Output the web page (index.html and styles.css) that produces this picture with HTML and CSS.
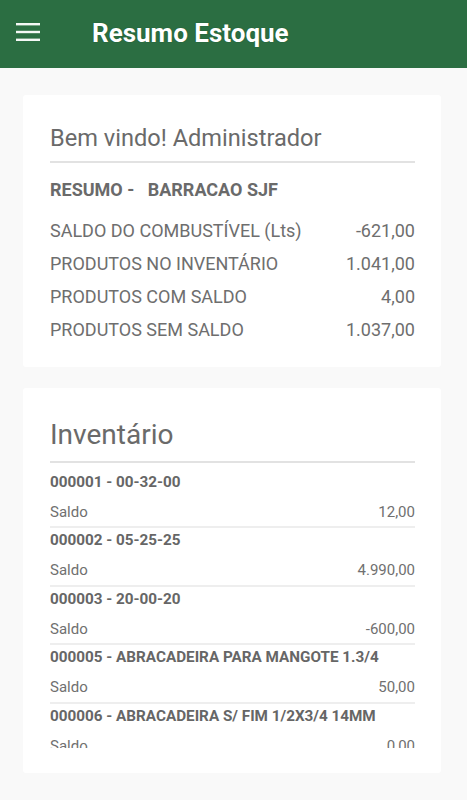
FILE: index.html
```html
<!DOCTYPE html>
<html lang="pt-BR">
  <head>
    <meta charset="UTF-8" />
    <meta name="viewport" content="width=device-width, initial-scale=1.0" />
    <title>Resumo Estoque</title>
    <link rel="stylesheet" href="styles.css">
  </head>
  <body>
    <!-- Toolbar -->
    <header class="toolbar">
      <svg class="menu-icon" width="24" height="18" viewBox="0 0 24 18">
        <rect x="0" y="0" width="24" height="2.4" fill="#f4f8f5" />
        <rect x="0" y="7.8" width="24" height="2.4" fill="#f4f8f5" />
        <rect x="0" y="15.6" width="24" height="2.4" fill="#f4f8f5" />
      </svg>
      <h1 class="toolbar-title">Resumo Estoque</h1>
    </header>

    <main class="content">
      <!-- Resumo -->
      <section class="card card-resumo">
        <h2 class="card-title">Bem vindo! Administrador</h2>
        <div class="resumo-local">RESUMO -   BARRACAO SJF</div>
        <div class="resumo-rows">
          <div class="resumo-row"><span>SALDO DO COMBUSTÍVEL (Lts)</span><span>-621,00</span></div>
          <div class="resumo-row"><span>PRODUTOS NO INVENTÁRIO</span><span>1.041,00</span></div>
          <div class="resumo-row"><span>PRODUTOS COM SALDO</span><span>4,00</span></div>
          <div class="resumo-row"><span>PRODUTOS SEM SALDO</span><span>1.037,00</span></div>
        </div>
      </section>

      <!-- Inventario -->
      <section class="card card-inventario">
        <h2 class="inv-title">Inventário</h2>
        <div class="inv-list">
          <div class="inv-item">
            <div class="inv-name">000001 - 00-32-00</div>
            <div class="inv-saldo"><span>Saldo</span><span>12,00</span></div>
          </div>
          <div class="inv-item">
            <div class="inv-name">000002 - 05-25-25</div>
            <div class="inv-saldo"><span>Saldo</span><span>4.990,00</span></div>
          </div>
          <div class="inv-item">
            <div class="inv-name">000003 - 20-00-20</div>
            <div class="inv-saldo"><span>Saldo</span><span>-600,00</span></div>
          </div>
          <div class="inv-item">
            <div class="inv-name">000005 - ABRACADEIRA PARA MANGOTE 1.3/4</div>
            <div class="inv-saldo"><span>Saldo</span><span>50,00</span></div>
          </div>
          <div class="inv-item">
            <div class="inv-name">000006 - ABRACADEIRA S/ FIM 1/2X3/4 14MM</div>
            <div class="inv-saldo"><span>Saldo</span><span>0,00</span></div>
          </div>
          <div class="inv-item">
            <div class="inv-name">000007 - ADUBO FOLIAR</div>
            <div class="inv-saldo"><span>Saldo</span><span>0,00</span></div>
          </div>
        </div>
      </section>
    </main>
  </body>
</html>
```

FILE: styles.css
```css
body {
  margin: 0;
  padding: 0;
  background-color: #f9f9f9;
  font-family: Roboto, "Liberation Sans", Arial, sans-serif;
  color: #6e6e6e;
}

.toolbar {
  height: 68px;
  background-color: #2b6e42;
  display: flex;
  align-items: center;
  padding-left: 16px;
  box-sizing: border-box;
}

.menu-icon {
  display: block;
  margin-bottom: 4px;
}

.toolbar-title {
  margin: 0 0 2px 52px;
  font-size: 26px;
  font-weight: 700;
  color: #ffffff;
  line-height: 28px;
  text-shadow: 0 0 1px rgba(0, 60, 20, 0.6);
}

.content {
  padding: 27px 26px 26px 23px;
  display: flex;
  flex-direction: column;
  gap: 21px;
}

.card {
  background-color: #ffffff;
  border-radius: 3px;
  padding: 0 26px 0 27px;
}

.card-resumo {
  padding-top: 29px;
  padding-bottom: 21px;
}

.card-title {
  margin: 0;
  font-size: 23.6px;
  font-weight: 400;
  line-height: 28px;
  color: #6a6a6a;
  padding-bottom: 9px;
  border-bottom: 2px solid #e2e2e2;
}

.resumo-local {
  margin-top: 17px;
  font-size: 18px;
  font-weight: 700;
  line-height: 20px;
  color: #6a6a6a;
  white-space: pre;
}

.resumo-rows {
  margin-top: 14px;
}

.resumo-row {
  display: flex;
  justify-content: space-between;
  font-size: 18px;
  line-height: 33px;
  color: #6e6e6e;
}

.card-inventario {
  padding-top: 30px;
  padding-bottom: 25px;
}

.inv-title {
  margin: 0;
  font-size: 28px;
  font-weight: 400;
  line-height: 34px;
  color: #6a6a6a;
  padding-bottom: 9px;
  border-bottom: 2px solid #e2e2e2;
}

.inv-list {
  height: 285px;
  overflow: hidden;
  padding-top: 7px;
  box-sizing: border-box;
}

.inv-item {
  padding: 2px 0 4.4px;
  border-bottom: 2px solid #eeeeee;
}

.inv-name {
  font-size: 15.25px;
  font-weight: 700;
  line-height: 20px;
  color: #666666;
}

.inv-saldo {
  display: flex;
  justify-content: space-between;
  margin-top: 10px;
  font-size: 15px;
  line-height: 20px;
  color: #707070;
}
```
